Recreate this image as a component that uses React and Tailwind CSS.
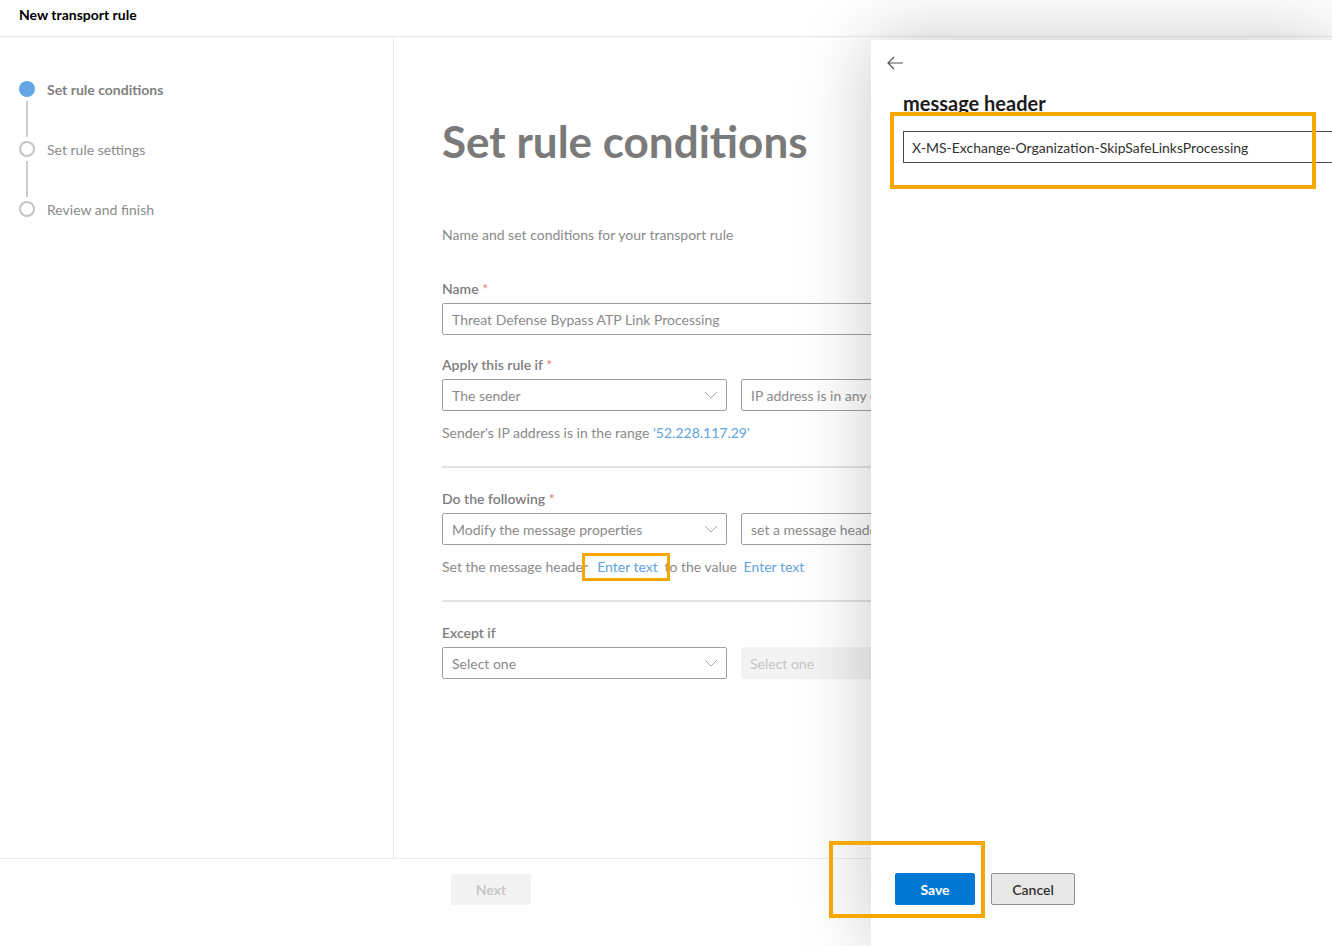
import React from "react";

const Chevron = () => (
  <svg width="14" height="8" viewBox="0 0 14 8" className="shrink-0">
    <path d="M1 1 L7 7 L13 1" fill="none" stroke="#a8a8a8" strokeWidth="1" />
  </svg>
);

const Select = ({ text, className = "" }) => (
  <div className={`h-[32px] border border-[#a0a0a0] rounded-[2px] flex items-center justify-between pl-[9px] pr-[8px] ${className}`}>
    <span className="text-[14px] text-[#8a8a8a] whitespace-nowrap">{text}</span>
    <Chevron />
  </div>
);

const Label = ({ children, req }) => (
  <div className="text-[14px] leading-[20px] font-semibold text-[#7d7d7d]">
    {children}
    {req && <span className="text-[#e08a8a]"> *</span>}
  </div>
);

export default function App() {
  return (
    <div
      className="w-[1332px] h-[946px] relative overflow-hidden bg-white flex flex-col"
      style={{ fontFamily: "Lato, 'Liberation Sans', sans-serif" }}
    >
      {/* header */}
      <div className="h-[37px] shrink-0 border-b border-[#e6e6e6] pl-[19px] pt-[2px]">
        <span className="text-[14px] leading-[20px] font-bold text-black">New transport rule</span>
      </div>

      {/* body */}
      <div className="flex h-[821px] shrink-0">
        {/* nav */}
        <div className="w-[394px] shrink-0 border-r border-[#ebebeb] pt-[44px] pl-[19px]">
          <div className="flex items-center gap-[12px] h-[16px]">
            <div className="w-[16px] h-[16px] rounded-full bg-[#62a7e3]" />
            <span className="text-[14px] font-bold text-[#7f7f7f]">Set rule conditions</span>
          </div>
          <div className="w-[2px] h-[36px] bg-[#cccccc] ml-[7px] my-[4px]" />
          <div className="flex items-center gap-[12px] h-[16px]">
            <div className="w-[16px] h-[16px] rounded-full border-2 border-[#c4c4c4]" />
            <span className="text-[14px] text-[#8c8c8c]">Set rule settings</span>
          </div>
          <div className="w-[2px] h-[36px] bg-[#cccccc] ml-[7px] my-[4px]" />
          <div className="flex items-center gap-[12px] h-[16px]">
            <div className="w-[16px] h-[16px] rounded-full border-2 border-[#c4c4c4]" />
            <span className="text-[14px] text-[#8c8c8c]">Review and finish</span>
          </div>
        </div>

        {/* main */}
        <div className="flex-1 pl-[48px] pt-[77px]">
          <div className="w-[600px]">
            <h1 className="text-[44px] leading-[54px] font-bold text-[#7a7a7a]">Set rule conditions</h1>
            <p className="mt-[57px] text-[14px] leading-[20px] text-[#8a8a8a]">
              Name and set conditions for your transport rule
            </p>

            <div className="mt-[34px]">
              <Label req>Name</Label>
              <div className="mt-[4px] h-[32px] border border-[#a0a0a0] rounded-[2px] flex items-center pl-[9px]">
                <span className="text-[14px] text-[#8a8a8a]">Threat Defense Bypass ATP Link Processing</span>
              </div>
            </div>

            <div className="mt-[20px]">
              <Label req>Apply this rule if</Label>
              <div className="mt-[4px] flex gap-[14px]">
                <Select text="The sender" className="w-[285px]" />
                <Select text="IP address is in any of these ranges" className="w-[285px] overflow-hidden" />
              </div>
              <p className="mt-[12px] text-[14px] leading-[20px] text-[#8a8a8a]">
                Sender's IP address is in the range <span className="text-[#5fa3e0]">'52.228.117.29'</span>
              </p>
            </div>

            <div className="mt-[23px] h-[2px] bg-[#e3e3e3]" />

            <div className="mt-[21px]">
              <Label req>Do the following</Label>
              <div className="mt-[4px] flex gap-[14px]">
                <Select text="Modify the message properties" className="w-[285px]" />
                <Select text="set a message header" className="w-[285px]" />
              </div>
              <p className="mt-[12px] text-[14px] leading-[20px] text-[#8a8a8a] whitespace-nowrap">
                Set the message header <span className="text-[#5fa3e0] ml-[6px] mr-[3px]">Enter text</span>{" "}
                to the value <span className="text-[#5fa3e0] ml-[3px]">Enter text</span>
              </p>
            </div>

            <div className="mt-[23px] h-[2px] bg-[#e3e3e3]" />

            <div className="mt-[21px]">
              <Label>Except if</Label>
              <div className="mt-[4px] flex gap-[14px]">
                <Select text="Select one" className="w-[285px]" />
                <div className="w-[285px] h-[32px] bg-[#f3f3f3] rounded-[2px] flex items-center pl-[9px]">
                  <span className="text-[14px] text-[#c6c6c6]">Select one</span>
                </div>
              </div>
            </div>
          </div>
        </div>
      </div>

      {/* footer */}
      <div className="flex-1 border-t border-[#ececec] pt-[15px] pl-[451px]">
        <div className="w-[80px] h-[31px] bg-[#f3f3f3] rounded-[2px] flex items-center justify-center">
          <span className="text-[14px] font-bold text-[#c8c8c8]">Next</span>
        </div>
      </div>

      {/* side panel */}
      <div className="absolute left-[871px] top-[40px] right-0 bottom-0 bg-white overflow-hidden shadow-[0_0_70px_rgba(0,0,0,0.22)]">
        <div className="pl-[16px] pt-[16px]">
          <svg width="17" height="14" viewBox="0 0 17 14">
            <path d="M7 1 L1 7 L7 13 M1 7 H16" fill="none" stroke="#555" strokeWidth="1.2" />
          </svg>
        </div>
        <div className="pl-[32px] mt-[20px]">
          <h2 className="text-[20px] leading-[26px] font-bold text-[#1b1b1b]">message header</h2>
          <div className="mt-[15px] w-[480px] h-[32px] border border-[#4a4a4a] flex items-center pl-[8px]">
            <span className="text-[14px] text-[#323130]">X-MS-Exchange-Organization-SkipSafeLinksProcessing</span>
          </div>
        </div>
        <div className="absolute left-[24px] top-[833px] flex gap-[16px]">
          <div className="w-[80px] h-[32px] bg-[#0078d4] rounded-[2px] flex items-center justify-center">
            <span className="text-[14px] font-bold text-white">Save</span>
          </div>
          <div className="w-[84px] h-[32px] bg-[#e8e8e8] border border-[#8f8f8f] rounded-[2px] flex items-center justify-center">
            <span className="text-[14px] font-semibold text-[#323130]">Cancel</span>
          </div>
        </div>
      </div>

      {/* annotation highlights */}
      <div className="absolute left-[582px] top-[553px] w-[88px] h-[28px] border-[3px] border-[#f7a800]" />
      <div className="absolute left-[890px] top-[112px] w-[426px] h-[77px] border-4 border-[#f7a800]" />
      <div className="absolute left-[829px] top-[841px] w-[156px] h-[77px] border-4 border-[#f7a800]" />
    </div>
  );
}
